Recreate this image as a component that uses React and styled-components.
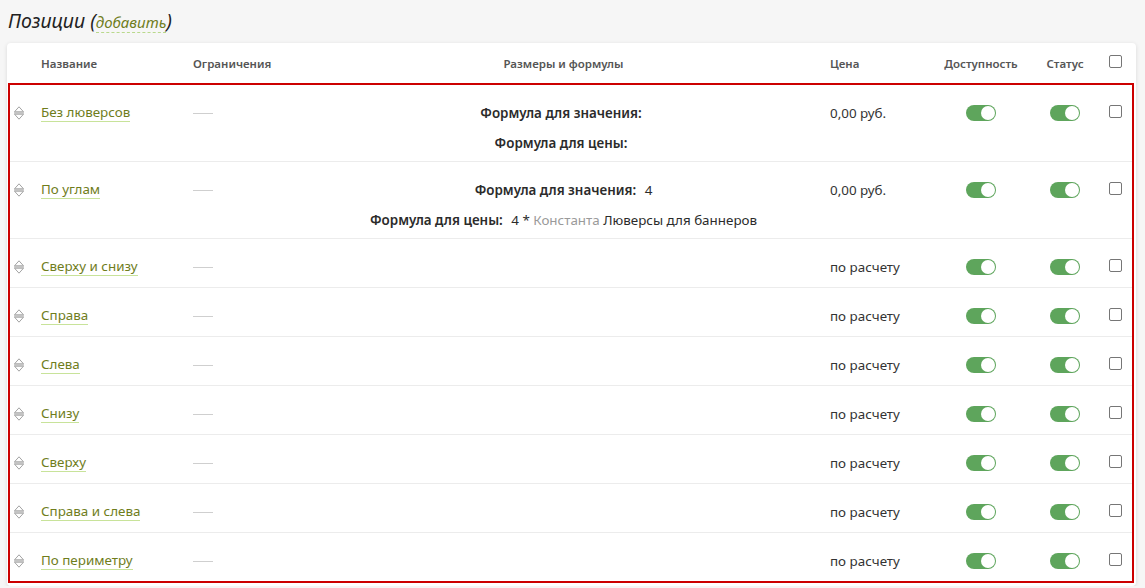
import React from "react";
import styled, { createGlobalStyle } from "styled-components";

const GlobalStyle = createGlobalStyle`
  body {
    margin: 0;
    background: #f6f6f6;
    font-family: "Noto Sans", "Open Sans", sans-serif;
    color: #333;
  }
`;

const COLS = "23px 152px 120px 517px 108px 102px 66px 34px";

const Page = styled.div`
  padding: 7px 8px 0 7px;
`;

const Heading = styled.h2`
  margin: 0 0 7px 1px;
  font-size: 19.5px;
  font-weight: 400;
  font-style: italic;
  line-height: 28px;
  color: #222;
`;

const AddLink = styled.span`
  font-size: 15px;
  color: #6f7d1c;
  border-bottom: 1px dashed #b9d98c;
`;

const Card = styled.div`
  width: 1129px;
  background: #fff;
  border-radius: 4px;
  box-shadow: 0 1px 4px rgba(0, 0, 0, 0.12);
  padding-bottom: 3px;
`;

const HeaderRow = styled.div`
  display: grid;
  grid-template-columns: ${COLS};
  height: 40px;
  align-items: center;
  padding-left: 3px;
`;

const HeadCell = styled.div`
  font-size: 11.5px;
  font-weight: 600;
  color: #555;
  padding-left: ${({ $pl }) => ($pl ? "8px" : "0")};
  text-align: ${({ $center }) => ($center ? "center" : "left")};
`;

const Body = styled.div`
  margin-left: 1px;
  width: 1122px;
  border: 2px solid #cc0000;
`;

const Row = styled.div`
  display: grid;
  grid-template-columns: ${COLS};
  align-items: start;
  padding: 19px 0 ${({ $tall }) => ($tall ? "9px" : "11px")};
  border-top: ${({ $first }) => ($first ? "none" : "1px solid #ececec")};
  font-size: 13.4px;
  line-height: 18px;
`;

const Cell = styled.div`
  display: flex;
  justify-content: ${({ $center }) => ($center ? "center" : "flex-start")};
  padding-left: ${({ $pl }) => ($pl ? "8px" : "0")};
  min-height: 18px;
  align-items: center;
`;

const Handle = styled.div`
  display: flex;
  padding-top: 2px;
  padding-left: 3px;
`;

const NameLink = styled.span`
  color: #6f7d1c;
  border-bottom: 1px solid #c8e39a;
  line-height: 17px;
`;

const Dash = styled.span`
  display: block;
  width: 20px;
  height: 1px;
  background: #cfcfcf;
`;

const Formulas = styled.div`
  display: flex;
  flex-direction: column;
  align-items: center;
  gap: 12px;
  width: 100%;
`;

const FormulaLine = styled.div`
  color: #2b2b2b;
  white-space: nowrap;
`;

const Label = styled.b`
  font-weight: 600;
  margin-right: 5px;
`;

const Const = styled.span`
  color: #9a9a9a;
`;

const Toggle = styled.span`
  position: relative;
  display: inline-block;
  width: 30px;
  height: 16px;
  border-radius: 8px;
  background: #5ea55c;
  &::after {
    content: "";
    position: absolute;
    right: 1px;
    top: 1px;
    width: 14px;
    height: 14px;
    border-radius: 50%;
    background: #fff;
  }
`;

const Check = styled.span`
  display: inline-block;
  width: 11px;
  height: 11px;
  border: 1px solid #767676;
  border-radius: 2px;
  background: #fff;
  margin-top: ${({ $mt }) => $mt || "0"};
`;

const DragIcon = () => (
  <svg width="12" height="14" viewBox="0 0 12 14" fill="none" stroke="#a3a3a3" strokeWidth="1" strokeLinejoin="round">
    <path d="M6 0.8 L1.5 5.8 H10.5 Z" />
    <path d="M1 7 H11" />
    <path d="M1.5 8.2 H10.5 L6 13.2 Z" />
  </svg>
);

const rows = [
  { name: "Без люверсов", price: "0,00 руб.", value: "", priceFormula: null },
  { name: "По углам", price: "0,00 руб.", value: "4", priceFormula: true },
  { name: "Сверху и снизу", price: "по расчету" },
  { name: "Справа", price: "по расчету" },
  { name: "Слева", price: "по расчету" },
  { name: "Снизу", price: "по расчету" },
  { name: "Сверху", price: "по расчету" },
  { name: "Справа и слева", price: "по расчету" },
  { name: "По периметру", price: "по расчету" },
];

export default function App() {
  return (
    <Page>
      <GlobalStyle />
      <Heading>
        Позиции (<AddLink>добавить</AddLink>)
      </Heading>
      <Card>
        <HeaderRow>
          <HeadCell />
          <HeadCell $pl>Название</HeadCell>
          <HeadCell $pl>Ограничения</HeadCell>
          <HeadCell $center>Размеры и формулы</HeadCell>
          <HeadCell $pl>Цена</HeadCell>
          <HeadCell $center>Доступность</HeadCell>
          <HeadCell $center>Статус</HeadCell>
          <HeadCell $center>
            <Check />
          </HeadCell>
        </HeaderRow>
        <Body>
          {rows.map((r, i) => {
            const hasFormula = r.value !== undefined;
            return (
              <Row key={r.name} $first={i === 0} $tall={hasFormula}>
                <Handle>
                  <DragIcon />
                </Handle>
                <Cell $pl>
                  <NameLink>{r.name}</NameLink>
                </Cell>
                <Cell $pl>
                  <Dash />
                </Cell>
                <Cell $center>
                  {hasFormula && (
                    <Formulas>
                      <FormulaLine>
                        <Label>Формула для значения:</Label> {r.value}
                      </FormulaLine>
                      <FormulaLine>
                        <Label>Формула для цены:</Label>
                        {r.priceFormula && (
                          <>
                            {" "}4 * <Const>Константа</Const> Люверсы для баннеров
                          </>
                        )}
                      </FormulaLine>
                    </Formulas>
                  )}
                </Cell>
                <Cell $pl>{r.price}</Cell>
                <Cell $center>
                  <Toggle />
                </Cell>
                <Cell $center>
                  <Toggle />
                </Cell>
                <Cell $center>
                  <Check $mt="-4px" />
                </Cell>
              </Row>
            );
          })}
        </Body>
      </Card>
    </Page>
  );
}
